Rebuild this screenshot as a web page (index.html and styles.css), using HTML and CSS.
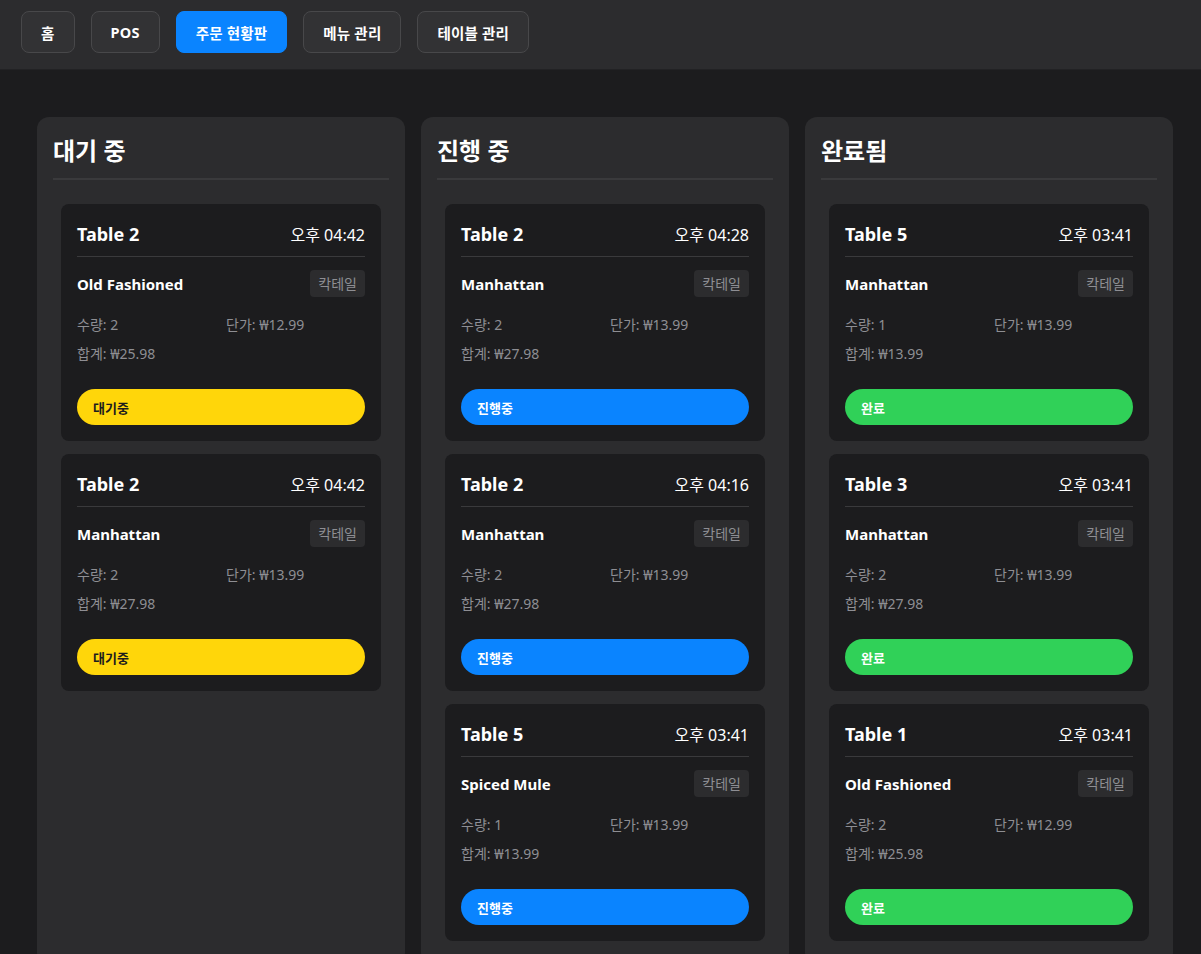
FILE: index.html
```html
<!DOCTYPE html>
<html lang="ko">
<head>
<meta charset="utf-8">
<title>주문 현황판</title>
<link rel="stylesheet" href="styles.css">
</head>
<body>
<nav class="nav">
  <button class="nav-btn">홈</button>
  <button class="nav-btn">POS</button>
  <button class="nav-btn active">주문 현황판</button>
  <button class="nav-btn">메뉴 관리</button>
  <button class="nav-btn">테이블 관리</button>
</nav>
<main class="board">
  <section class="column">
    <h2 class="column-title">대기 중</h2>
    <div class="card-list">
      <article class="card">
        <div class="card-head"><span class="table">Table 2</span><span class="time">오후 04:42</span></div>
        <div class="item-row"><span class="item-name">Old Fashioned</span><span class="badge">칵테일</span></div>
        <div class="details"><span>수량: 2</span><span>단가: ₩12.99</span><span>합계: ₩25.98</span></div>
        <div class="status waiting">대기중</div>
      </article>
      <article class="card">
        <div class="card-head"><span class="table">Table 2</span><span class="time">오후 04:42</span></div>
        <div class="item-row"><span class="item-name">Manhattan</span><span class="badge">칵테일</span></div>
        <div class="details"><span>수량: 2</span><span>단가: ₩13.99</span><span>합계: ₩27.98</span></div>
        <div class="status waiting">대기중</div>
      </article>
    </div>
  </section>
  <section class="column">
    <h2 class="column-title">진행 중</h2>
    <div class="card-list">
      <article class="card">
        <div class="card-head"><span class="table">Table 2</span><span class="time">오후 04:28</span></div>
        <div class="item-row"><span class="item-name">Manhattan</span><span class="badge">칵테일</span></div>
        <div class="details"><span>수량: 2</span><span>단가: ₩13.99</span><span>합계: ₩27.98</span></div>
        <div class="status progress">진행중</div>
      </article>
      <article class="card">
        <div class="card-head"><span class="table">Table 2</span><span class="time">오후 04:16</span></div>
        <div class="item-row"><span class="item-name">Manhattan</span><span class="badge">칵테일</span></div>
        <div class="details"><span>수량: 2</span><span>단가: ₩13.99</span><span>합계: ₩27.98</span></div>
        <div class="status progress">진행중</div>
      </article>
      <article class="card">
        <div class="card-head"><span class="table">Table 5</span><span class="time">오후 03:41</span></div>
        <div class="item-row"><span class="item-name">Spiced Mule</span><span class="badge">칵테일</span></div>
        <div class="details"><span>수량: 1</span><span>단가: ₩13.99</span><span>합계: ₩13.99</span></div>
        <div class="status progress">진행중</div>
      </article>
    </div>
  </section>
  <section class="column">
    <h2 class="column-title">완료됨</h2>
    <div class="card-list">
      <article class="card">
        <div class="card-head"><span class="table">Table 5</span><span class="time">오후 03:41</span></div>
        <div class="item-row"><span class="item-name">Manhattan</span><span class="badge">칵테일</span></div>
        <div class="details"><span>수량: 1</span><span>단가: ₩13.99</span><span>합계: ₩13.99</span></div>
        <div class="status done">완료</div>
      </article>
      <article class="card">
        <div class="card-head"><span class="table">Table 3</span><span class="time">오후 03:41</span></div>
        <div class="item-row"><span class="item-name">Manhattan</span><span class="badge">칵테일</span></div>
        <div class="details"><span>수량: 2</span><span>단가: ₩13.99</span><span>합계: ₩27.98</span></div>
        <div class="status done">완료</div>
      </article>
      <article class="card">
        <div class="card-head"><span class="table">Table 1</span><span class="time">오후 03:41</span></div>
        <div class="item-row"><span class="item-name">Old Fashioned</span><span class="badge">칵테일</span></div>
        <div class="details"><span>수량: 2</span><span>단가: ₩12.99</span><span>합계: ₩25.98</span></div>
        <div class="status done">완료</div>
      </article>
    </div>
  </section>
</main>
</body>
</html>
```
FILE: styles.css
```css
* { box-sizing: border-box; }
html, body { margin: 0; padding: 0; }
body {
  background: #1c1c1e;
  color: #ffffff;
  font-family: "Noto Sans", "Noto Sans CJK KR", sans-serif;
  overflow: hidden;
}
.nav {
  height: 70px;
  background: #2c2c2e;
  display: flex;
  align-items: flex-start;
  gap: 16px;
  padding: 11px 21px 0;
  border-bottom: 1px solid #222224;
}
.nav-btn {
  height: 42px;
  padding: 0 19px;
  background: #323234;
  border: 1px solid #48484a;
  border-radius: 8px;
  color: #ffffff;
  font-family: inherit;
  font-size: 14.5px;
  font-weight: 700;
  letter-spacing: 0.2px;
}
.nav-btn.active {
  background: #0a84ff;
  border-color: #0a84ff;
}
.board {
  display: grid;
  grid-template-columns: repeat(3, 368px);
  gap: 16px;
  padding: 47px 28px 0 37px;
}
.column {
  background: #2c2c2e;
  border-radius: 12px;
  padding: 16px 16px 16px;
}
.column-title {
  margin: 0 0 16px;
  font-size: 24px;
  font-weight: 700;
  line-height: 36px;
  padding-bottom: 9px;
  border-bottom: 2px solid #3a3a3c;
}
.card-list {
  display: flex;
  flex-direction: column;
  gap: 13px;
  padding: 8px;
}
.card {
  background: #1c1c1e;
  border-radius: 8px;
  padding: 16px;
}
.card-head {
  display: flex;
  justify-content: space-between;
  align-items: center;
  padding-bottom: 8px;
  border-bottom: 1px solid #3a3a3c;
  height: 37px;
}
.table { font-size: 18px; font-weight: 700; }
.time { font-size: 16px; }
.item-row {
  display: flex;
  justify-content: space-between;
  align-items: center;
  margin-top: 13px;
}
.item-name { font-size: 15px; font-weight: 700; }
.badge {
  background: #2c2c2e;
  color: #8e8e93;
  font-size: 14px;
  line-height: 19px;
  padding: 4px 8px;
  border-radius: 4px;
}
.details {
  display: grid;
  grid-template-columns: 1fr 1fr;
  column-gap: 10px;
  row-gap: 8px;
  margin-top: 17px;
  font-size: 14px;
  line-height: 21px;
  color: #8e8e93;
}
.status {
  margin-top: 25px;
  height: 36px;
  border-radius: 18px;
  padding: 0 16px;
  display: flex;
  align-items: center;
  font-size: 13px;
  font-weight: 700;
}
.status.waiting { background: #ffd60a; color: #1c1c1e; }
.status.progress { background: #0a84ff; color: #ffffff; }
.status.done { background: #30d158; color: #ffffff; }
```
